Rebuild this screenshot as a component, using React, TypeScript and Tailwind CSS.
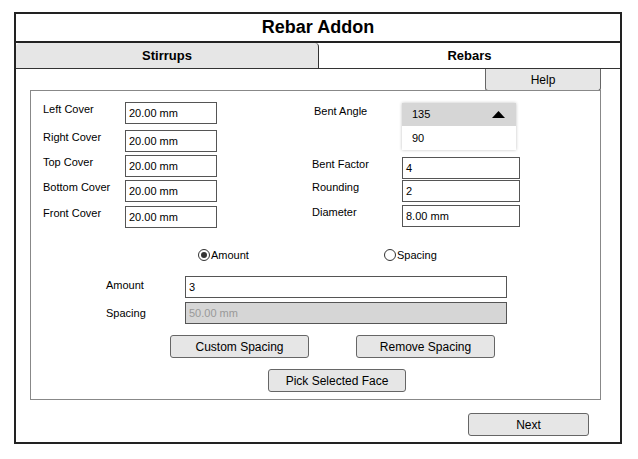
const font = { fontFamily: '"Liberation Sans", Arial, sans-serif' };

const Field = ({ value, w, h = "h-[22px]" }: { value: string; w: string; h?: string }) => (
  <div className={`${w} ${h} border border-[#555] bg-white flex items-center pl-[3px] text-[11px] text-black`}>
    {value}
  </div>
);

const Btn = ({ label, w }: { label: string; w: string }) => (
  <button className={`${w} h-[23px] rounded-[3px] border border-[#666] bg-[#e6e6e6] text-[12px] text-black flex items-center justify-center`}>
    {label}
  </button>
);

const Radio = ({ label, checked }: { label: string; checked?: boolean }) => (
  <div className="flex items-center gap-[1px] text-[11px] text-black">
    <span className="w-[12px] h-[12px] rounded-full border border-[#333] flex items-center justify-center">
      {checked && <span className="w-[6px] h-[6px] rounded-full bg-[#333]" />}
    </span>
    {label}
  </div>
);

const leftRows = [
  { label: "Left Cover", mt: "mt-0" },
  { label: "Right Cover", mt: "mt-[6px]" },
  { label: "Top Cover", mt: "mt-[3px]" },
  { label: "Bottom Cover", mt: "mt-[3px]" },
  { label: "Front Cover", mt: "mt-[4px]" },
];

export default function App() {
  return (
    <div className="w-full h-[459px] bg-white pt-[12px] pl-[14px]" style={font}>
      <div className="w-[608px] h-[432px] border-2 border-[#222] flex flex-col">
        {/* Title */}
        <div className="h-[29px] border-b-2 border-[#222] flex items-center justify-center text-[18px] font-bold text-black">
          Rebar Addon
        </div>

        {/* Tabs */}
        <div className="h-[26px] flex border-b border-[#333]">
          <div className="w-[303px] bg-[#e6e6e6] rounded-t-[4px] border-r border-[#333] flex items-center justify-center text-[13px] font-bold text-black">
            Stirrups
          </div>
          <div className="flex-1 bg-white rounded-t-[4px] flex items-center justify-center text-[13px] font-bold text-black">
            Rebars
          </div>
        </div>

        {/* Body */}
        <div className="flex flex-col pl-[14px]">
          <div className="flex justify-end w-[571px] -mb-px">
            <button className="w-[116px] h-[22px] rounded-b-[3px] border border-t-0 border-[#666] bg-[#e6e6e6] text-[12px] text-black">
              Help
            </button>
          </div>

          <div className="w-[571px] h-[310px] border border-[#888] flex flex-col">
            {/* Top fields */}
            <div className="flex pt-[11px] pl-[12px]">
              <div className="flex flex-col w-[270px]">
                {leftRows.map((r) => (
                  <div key={r.label} className={`flex ${r.mt}`}>
                    <span className="w-[82px] text-[11px] leading-[14px] text-black">{r.label}</span>
                    <Field value="20.00 mm" w="w-[92px]" />
                  </div>
                ))}
              </div>

              <div className="flex flex-col pt-[1px] -ml-[1px]">
                <div className="flex">
                  <span className="w-[90px] pl-[2px] pt-[1px] text-[11px] leading-[14px] text-black">Bent Angle</span>
                  <div className="w-[114px] shadow-[0_0_3px_rgba(0,0,0,0.25)] text-[11px] text-black">
                    <div className="h-[23px] bg-[#d6d6d6] flex items-center justify-between pl-[10px] pr-[11px]">
                      <span>135</span>
                      <svg width="13" height="7" viewBox="0 0 13 7">
                        <path d="M0 7 L6.5 0 L13 7 Z" fill="#000" />
                      </svg>
                    </div>
                    <div className="h-[24px] bg-white flex items-center pl-[10px]">90</div>
                  </div>
                </div>
                <div className="flex mt-[7px]">
                  <span className="w-[90px] text-[11px] leading-[14px] text-black">Bent Factor</span>
                  <Field value="4" w="w-[118px]" />
                </div>
                <div className="flex mt-[1px]">
                  <span className="w-[90px] text-[11px] leading-[14px] text-black">Rounding</span>
                  <Field value="2" w="w-[118px]" />
                </div>
                <div className="flex mt-[3px]">
                  <span className="w-[90px] text-[11px] leading-[14px] text-black">Diameter</span>
                  <Field value="8.00 mm" w="w-[118px]" />
                </div>
              </div>
            </div>

            {/* Radios */}
            <div className="flex mt-[19px] pl-[167px] h-[16px] items-center">
              <div className="w-[186px]">
                <Radio label="Amount" checked />
              </div>
              <Radio label="Spacing" />
            </div>

            {/* Amount / Spacing */}
            <div className="flex flex-col pl-[75px] mt-[13px] gap-[4px]">
              <div className="flex">
                <span className="w-[79px] pt-[2px] text-[11px] leading-[14px] text-black">Amount</span>
                <Field value="3" w="w-[322px]" />
              </div>
              <div className="flex">
                <span className="w-[79px] pt-[4px] text-[11px] leading-[14px] text-black">Spacing</span>
                <div className="w-[322px] h-[22px] border border-[#555] bg-[#d6d6d6] flex items-center pl-[3px] text-[11px] text-[#999]">
                  50.00 mm
                </div>
              </div>
            </div>

            {/* Buttons */}
            <div className="flex pl-[139px] mt-[11px] gap-[47px]">
              <Btn label="Custom Spacing" w="w-[139px]" />
              <Btn label="Remove Spacing" w="w-[139px]" />
            </div>
            <div className="flex pl-[237px] mt-[11px]">
              <Btn label="Pick Selected Face" w="w-[138px]" />
            </div>
          </div>

          <div className="flex w-[559px] justify-end mt-[13px]">
            <Btn label="Next" w="w-[121px]" />
          </div>
        </div>
      </div>
    </div>
  );
}
